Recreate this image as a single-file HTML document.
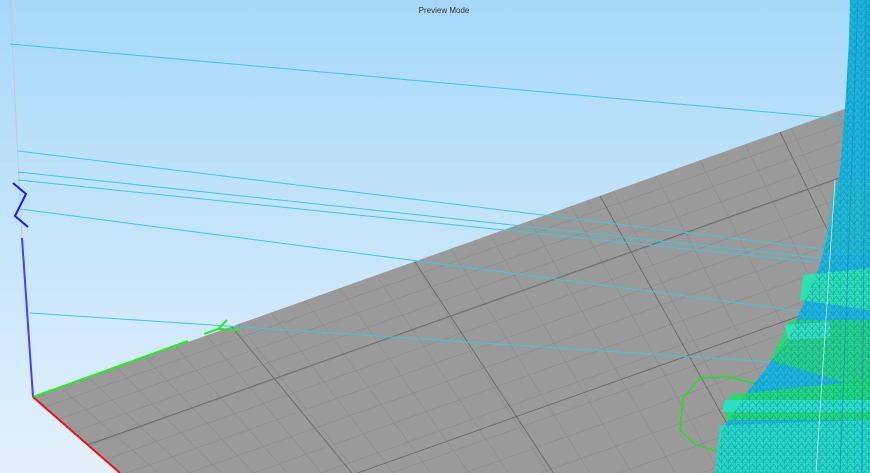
<!DOCTYPE html>
<html><head><style>
html,body{margin:0;padding:0;width:870px;height:473px;overflow:hidden}
svg{display:block}
</style></head><body>
<svg width="870" height="473" viewBox="0 0 870 473" xmlns="http://www.w3.org/2000/svg">
<defs>
<linearGradient id="bg" x1="0" y1="0" x2="0" y2="1">
<stop offset="0" stop-color="#a6d8fa"/><stop offset="1" stop-color="#e4f1fb"/>
</linearGradient>
<pattern id="lat" patternUnits="userSpaceOnUse" width="7" height="7">
<rect width="7" height="7" fill="none"/>
<path d="M0,0 L7,0 M0,0 L0,7 M0,7 L3.5,2 L7,7" stroke="#0d86b8" stroke-width="0.8" fill="none" opacity="0.6"/>
</pattern>
<clipPath id="bed"><polygon points="33,397 870,100 870,473 120,473"/></clipPath>
</defs>
<rect width="870" height="473" fill="url(#bg)"/>
<text x="444" y="13" font-family="Liberation Sans, sans-serif" font-size="8" fill="#333" text-anchor="middle">Preview Mode</text>
<line x1="10" y1="0" x2="22" y2="238" stroke="#c8c8c8" stroke-width="1"/>
<polygon points="33,397 870,100 870,473 120,473" fill="#9a9a9a"/>
<g clip-path="url(#bed)" stroke-width="0.6">
<g stroke="#8a8a8a">
<path d="M0,423 L870,114 M0,440 L870,131 M0,458 L870,149 M0,477 L870,168 M0,497 L870,188 M0,518 L870,209 M0,540 L870,231 M0,563 L870,254 M0,587 L870,278 M0,612 L870,303 M0,638 L870,329 M0,665 L870,356 M0,693 L870,384 M0,722 L870,413 M0,752 L870,443 M0,783 L870,474"/>
<path d="M60,387 L170,483 M88,377 L200,483 M116,367 L231,483 M145,357 L263,483 M175,346 L296,483 M206,335 L330,483 M238,324 L365,483 M271,312 L401,483 M305,300 L438,483 M340,288 L476,483 M376,275 L515,483 M413,262 L555,483 M451,249 L596,483 M490,235 L638,483 M530,221 L681,483 M571,206 L725,483 M613,191 L770,483 M656,176 L816,483 M700,160 L862,483 M745,144 L910,483 M791,128 L960,483 M838,111 L1010,483"/>
</g>
<g stroke="#6a6a6a" stroke-width="0.9">
<path d="M0,476 L870,167 M0,600 L870,291 M0,760 L870,451"/>
<path d="M232,327 L360,483 M415,262 L560,483 M600,196 L760,483 M780,132 L950,483"/>
</g>
</g>
<g stroke="#3cc8e0" stroke-width="1">
<line x1="10" y1="44" x2="845" y2="119"/>
<line x1="18" y1="151" x2="830" y2="250"/>
<line x1="18" y1="172" x2="820" y2="258"/>
<line x1="18" y1="180" x2="815" y2="262"/>
<line x1="20" y1="209" x2="808" y2="312"/>
<line x1="30" y1="313" x2="770" y2="362"/>
</g>
<line x1="22" y1="238" x2="33" y2="397" stroke="#4444ee" stroke-width="2"/>
<polyline points="13,183 26,194 15,216 28,227" fill="none" stroke="#1a1ae8" stroke-width="2"/>
<line x1="33" y1="397" x2="188" y2="341" stroke="#22ee22" stroke-width="2"/>
<path d="M204,334 L218,329 L227,320 M218,329 L240,330" fill="none" stroke="#22ee22" stroke-width="2"/>
<line x1="33" y1="397" x2="120" y2="473" stroke="#ee1111" stroke-width="2"/>
<polygon points="700,378 730,377 760,385 755,440 720,452 696,445 680,430 683,398" fill="none" stroke="#22dd22" stroke-width="1.5"/>
<g>
<polygon points="850,0 870,0 870,473 715,473 722,430 745,395 765,370 790,335 805,300 820,265 832,220 840,170 845,110 849,40" fill="#1eb4dc"/>
<polygon points="835,180 870,180 870,255 822,255" fill="#25c0c8" opacity="0.5"/>
<polygon points="803,275 870,268 870,310 800,300" fill="#2ee0b0"/>
<polygon points="790,320 870,320 870,390 770,360" fill="#2ad870" opacity="0.85"/>
<polygon points="785,325 830,322 830,338 788,340" fill="#33e0b8"/>
<polygon points="730,395 870,380 870,420 725,420" fill="#22dd66" opacity="0.9"/>
<polygon points="725,400 870,400 870,412 722,412" fill="#2ee0c0"/>
<polygon points="720,425 870,420 870,473 715,473" fill="#28d8c0"/>
<polygon points="850,0 870,0 870,473 715,473 722,430 745,395 765,370 790,335 805,300 820,265 832,220 840,170 845,110 849,40" fill="url(#lat)"/>
<g stroke="#0f8ec0" stroke-width="0.8" opacity="0.8">
<line x1="858" y1="0" x2="840" y2="473"/>
<line x1="866" y1="0" x2="862" y2="473"/>
</g>
<line x1="835" y1="180" x2="816" y2="473" stroke="#b8e8f0" stroke-width="0.8"/>
</g>
</svg>
</body></html>
